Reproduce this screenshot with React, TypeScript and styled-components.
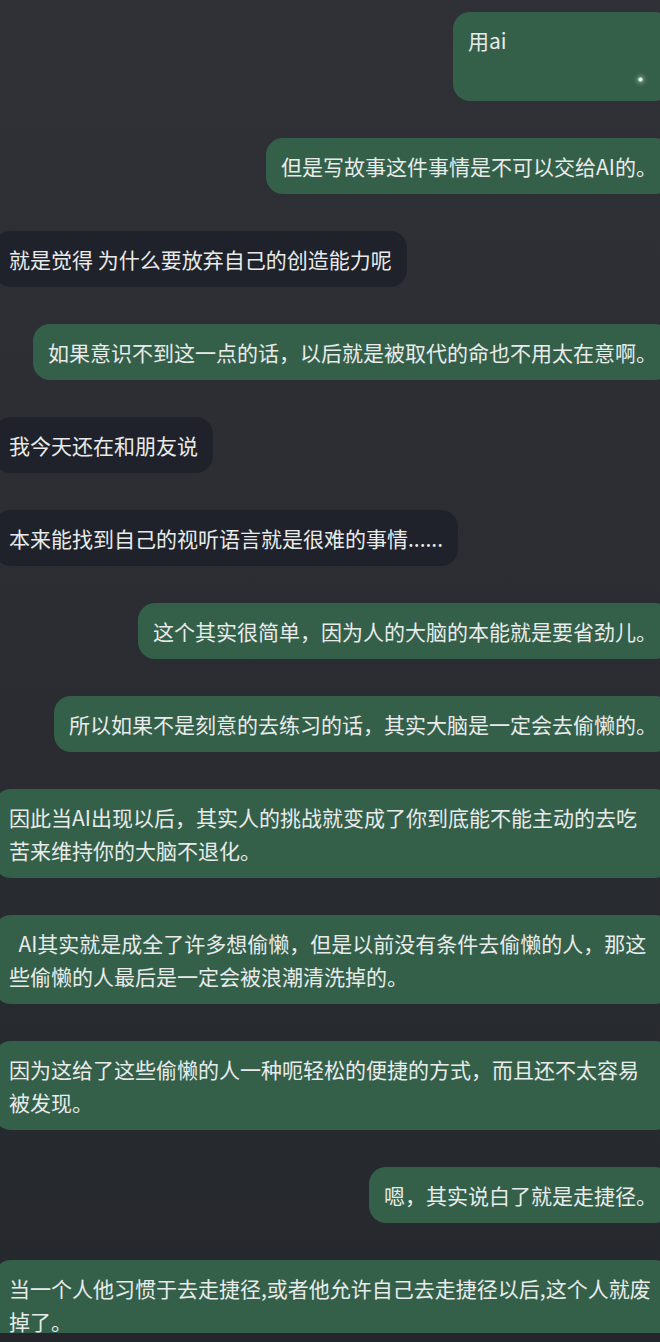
import React from "react";
import styled, { createGlobalStyle } from "styled-components";

const GlobalStyle = createGlobalStyle`
  html, body {
    margin: 0;
    padding: 0;
    background: #24262b;
  }
  body {
    width: 660px;
    height: 1342px;
    overflow: hidden;
    font-family: "Noto Sans CJK SC", "Noto Sans", sans-serif;
  }
`;

const Screen = styled.div`
  width: 660px;
  height: 1342px;
  display: flex;
  flex-direction: column;
  overflow: hidden;
  background: linear-gradient(180deg, #303136 0%, #2b2d32 45%, #25282d 100%);
`;

const ChatArea = styled.div`
  height: 1333px;
  overflow: hidden;
  flex: none;
`;

const Thread = styled.div`
  width: 678px;
  margin-left: -6px;
  padding-top: 12px;
  display: flex;
  flex-direction: column;
  gap: 37px;
`;

const Row = styled.div<{ $mine: boolean }>`
  display: flex;
  justify-content: ${(p) => (p.$mine ? "flex-end" : "flex-start")};
`;

const Bubble = styled.div<{ $mine: boolean; $minWidth?: number; $wide?: boolean }>`
  position: relative;
  box-sizing: border-box;
  max-width: 678px;
  width: ${(p) => (p.$wide ? "100%" : "auto")};
  min-width: ${(p) => (p.$minWidth ? `${p.$minWidth}px` : "0")};
  padding: 11.5px 15px;
  border-radius: 17px;
  background: ${(p) => (p.$mine ? "#34604a" : "#1f222a")};
  color: #e9ebea;
  font-size: 21px;
  line-height: 33px;
  font-weight: 400;
  white-space: pre-wrap;
  word-break: break-all;
`;

const Glow = styled.span`
  position: absolute;
  right: 29px;
  bottom: 19px;
  width: 5px;
  height: 5px;
  border-radius: 50%;
  background: radial-gradient(circle, #ffffff 0%, #d8efe2 45%, rgba(200, 230, 215, 0) 100%);
  box-shadow: 0 0 4px 1px rgba(220, 245, 230, 0.5);
`;

const BottomStrip = styled.div`
  height: 9px;
  flex: none;
  background: #24262b;
`;

type Msg = { mine: boolean; text: string; minWidth?: number; glow?: boolean; wide?: boolean };

const messages: Msg[] = [
  { mine: true, text: "用ai\n\u00a0", minWidth: 219, glow: true },
  { mine: true, text: "但是写故事这件事情是不可以交给AI的。" },
  { mine: false, text: "就是觉得 为什么要放弃自己的创造能力呢" },
  { mine: true, text: "如果意识不到这一点的话，以后就是被取代的命也不用太在意啊。" },
  { mine: false, text: "我今天还在和朋友说" },
  { mine: false, text: "本来能找到自己的视听语言就是很难的事情......" },
  { mine: true, text: "这个其实很简单，因为人的大脑的本能就是要省劲儿。" },
  { mine: true, text: "所以如果不是刻意的去练习的话，其实大脑是一定会去偷懒的。" },
  {
    mine: true,
    wide: true,
    text: "因此当AI出现以后，其实人的挑战就变成了你到底能不能主动的去吃\n苦来维持你的大脑不退化。",
  },
  {
    mine: true,
    wide: true,
    text: "\u00a0\u00a0AI其实就是成全了许多想偷懒，但是以前没有条件去偷懒的人，那这\n些偷懒的人最后是一定会被浪潮清洗掉的。",
  },
  {
    mine: true,
    wide: true,
    text: "因为这给了这些偷懒的人一种呃轻松的便捷的方式，而且还不太容易\n被发现。",
  },
  { mine: true, text: "嗯，其实说白了就是走捷径。" },
  {
    mine: true,
    wide: true,
    text: "当一个人他习惯于去走捷径,或者他允许自己去走捷径以后,这个人就废\n掉了。",
  },
];

export default function App() {
  return (
    <>
      <GlobalStyle />
      <Screen>
        <ChatArea>
          <Thread>
            {messages.map((m, i) => (
              <Row key={i} $mine={m.mine}>
                <Bubble $mine={m.mine} $minWidth={m.minWidth} $wide={m.wide}>
                  {m.text}
                  {m.glow && <Glow />}
                </Bubble>
              </Row>
            ))}
          </Thread>
        </ChatArea>
        <BottomStrip />
      </Screen>
    </>
  );
}
